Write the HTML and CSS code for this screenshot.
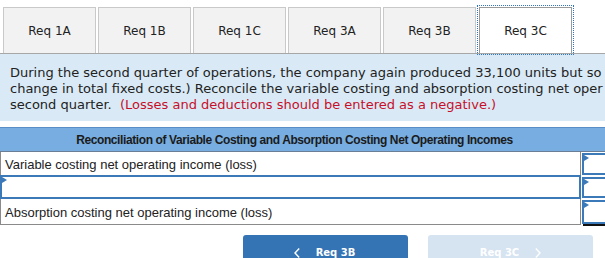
FILE: index.html
```html
<!DOCTYPE html>
<html>
<head>
<meta charset="utf-8">
<link rel="stylesheet" href="styles.css">
</head>
<body>
<div class="page">
  <div class="tabs">
    <div class="tab">Req 1A</div>
    <div class="tab">Req 1B</div>
    <div class="tab">Req 1C</div>
    <div class="tab">Req 3A</div>
    <div class="tab">Req 3B</div>
    <div class="tab active">Req 3C</div>
  </div>
  <div class="prompt">
    <p class="line">During the second quarter of operations, the company again produced 33,100 units but so</p>
    <p class="line">change in total fixed costs.) Reconcile the variable costing and absorption costing net oper</p>
    <p class="line">second quarter.&nbsp; <span class="warn">(Losses and deductions should be entered as a negative.)</span></p>
  </div>
  <div class="table">
    <div class="th">Reconciliation of Variable Costing and Absorption Costing Net Operating Incomes</div>
    <div class="th th-end"></div>
    <div class="label">Variable costing net operating income (loss)</div>
    <div class="val"><span class="input"><i class="tri"></i></span></div>
    <div class="label label-input"><i class="tri"></i></div>
    <div class="val"><span class="input"><i class="tri"></i></span></div>
    <div class="label last">Absorption costing net operating income (loss)</div>
    <div class="val last"><span class="input total"><i class="tri"></i></span></div>
  </div>
  <div class="nav">
    <div class="btn prev"><svg class="chev" width="6" height="10" viewBox="0 0 6 10"><path d="M5.2 0.6 L1 5 L5.2 9.4" fill="none" stroke="#fff" stroke-width="1.4"/></svg><span class="btxt">Req 3B</span></div>
    <div class="btn next"><span class="btxt">Req 3C</span><svg class="chev" width="6" height="10" viewBox="0 0 6 10"><path d="M0.8 0.6 L5 5 L0.8 9.4" fill="none" stroke="#fff" stroke-width="1.4"/></svg></div>
  </div>
</div>
</body>
</html>
```
FILE: styles.css
```css
html, body {
  margin: 0;
  padding: 0;
  background: #fff;
  overflow: hidden;
}
.page {
  width: 605px;
  height: 258px;
  overflow: hidden;
  font-family: "DejaVu Sans", Verdana, sans-serif;
  color: #222;
}
.tabs {
  display: flex;
  align-items: flex-end;
  gap: 2px;
  height: 53px;
  padding-left: 3px;
  border-bottom: 1px solid #a7a7a7;
}
.tab {
  width: 93px;
  height: 46px;
  box-sizing: border-box;
  border: 1px solid #c9c9c9;
  border-bottom: none;
  background: #f2f2f2;
  font-size: 12px;
  display: flex;
  align-items: center;
  justify-content: center;
  color: #222;
}
.tab.active {
  background: #fff;
  border: 1px solid #9a9a9a;
  border-bottom: none;
  outline: 1px dotted #2f74c0;
  outline-offset: 1px;
  margin-left: 1px;
}
.prompt {
  background: #d9eaf6;
  height: 67px;
  padding: 11px 0 0 10px;
  box-sizing: border-box;
  white-space: nowrap;
  font-size: 13px;
}
.line {
  margin: 0;
  line-height: 16px;
}
.warn {
  color: #c6102a;
}
.table {
  margin-top: 6px;
  display: grid;
  grid-template-columns: 581px 40px;
  grid-template-rows: 25px 24px 23px 26px;
  width: 621px;
  font-family: "Liberation Sans", Arial, sans-serif;
  font-size: 13px;
  color: #222;
}
.th {
  background: #77ade0;
  border-top: 1px solid #5b8ec4;
  border-bottom: 1px solid #6a7f96;
  font-weight: bold;
  font-size: 12px;
  letter-spacing: -0.4px;
  display: flex;
  align-items: center;
  justify-content: center;
  padding-left: 8px;
  color: #1b1b1b;
}
.th-end {
  padding: 0;
}
.label {
  border-left: 1px solid #8a8a8a;
  border-right: 1px solid #8a8a8a;
  border-bottom: 1px solid #8a8a8a;
  display: flex;
  align-items: center;
  padding-left: 4px;
  padding-top: 1px;
  box-sizing: border-box;
  position: relative;
}
.label-input {
  border: 2px solid #3c79b9;
  margin-top: -1px;
}
.val {
  padding: 1px 0 1px 1px;
  box-sizing: border-box;
  display: flex;
}
.input {
  flex: 1;
  border: 2px solid #3c79b9;
  border-right: none;
  position: relative;
  background: #fff;
}
.input.total {
  box-shadow: 0 3px 0 -1px #111;
}
.tri {
  position: absolute;
  left: 0;
  top: 0;
  width: 0;
  height: 0;
  border-top: 3px solid transparent;
  border-bottom: 3px solid transparent;
  border-left: 5px solid #3c79b9;
}
.nav {
  display: flex;
  gap: 20px;
  padding-left: 243px;
  margin-top: 10px;
}
.btn {
  width: 165px;
  height: 36px;
  border-radius: 3px;
  box-sizing: border-box;
  font-family: "DejaVu Sans", Verdana, sans-serif;
  font-weight: bold;
  font-size: 10px;
  color: #fff;
  display: flex;
  align-items: flex-start;
  justify-content: center;
  gap: 16px;
  padding-top: 12px;
}
.btxt {
  line-height: 12px;
}
.chev {
  display: block;
  margin-top: 1px;
}
.prev {
  background: #3474b4;
  padding-right: 2px;
}
.next {
  background: #d6e3f1;
}
```
